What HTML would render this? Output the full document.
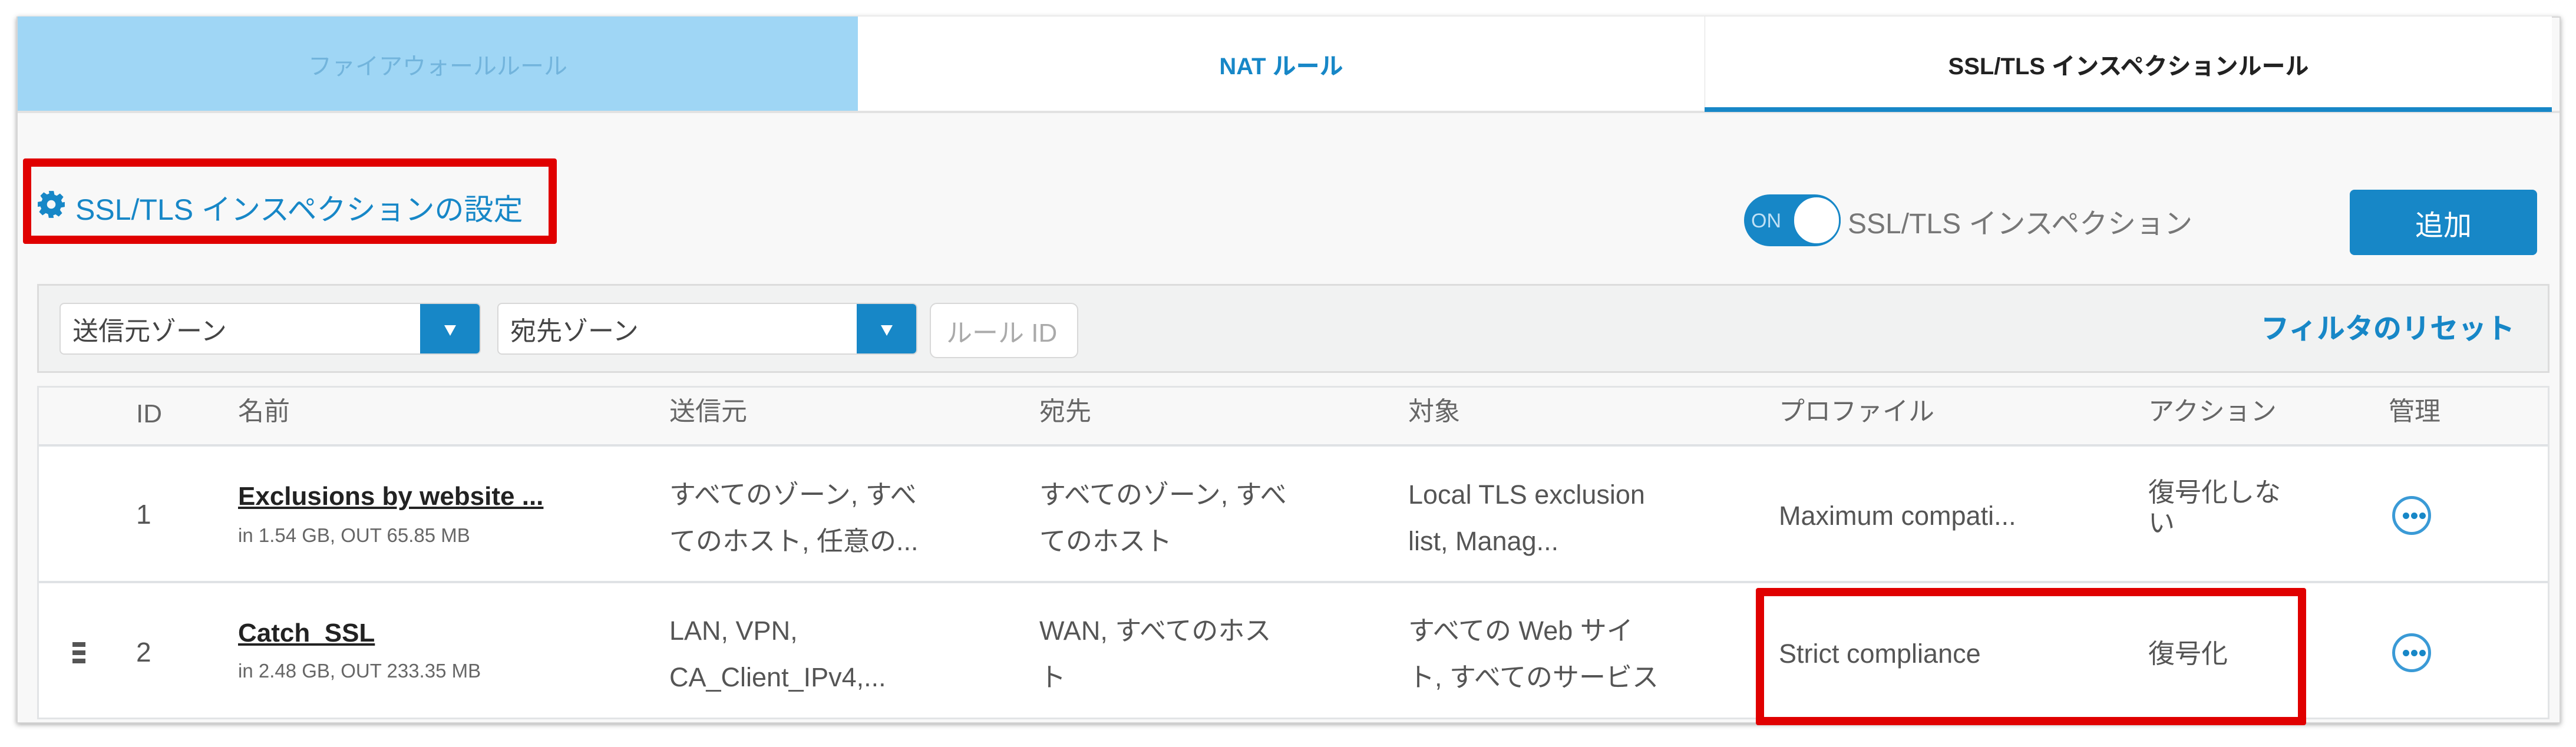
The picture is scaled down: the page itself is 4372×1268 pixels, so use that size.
<!DOCTYPE html>
<html><head><meta charset="utf-8"><style>
*{margin:0;padding:0;box-sizing:border-box}
body{width:4372px;height:1268px;background:#fff;position:relative;overflow:hidden;font-family:"Liberation Sans","Noto Sans CJK JP",sans-serif;color:#555}
.a{position:absolute;white-space:nowrap}
#panel{position:absolute;left:28px;top:28px;width:4318px;height:1200px;background:#f8f8f8;border:2px solid #d6d6d6;box-shadow:0 2px 8px rgba(0,0,0,.35)}
.tab{position:absolute;top:28px;height:162px;display:flex;align-items:center;justify-content:center;font-size:40px}
.sel{position:absolute;top:514px;height:88px;background:#fff;border:2px solid #d8d8d8;border-radius:8px;font-size:44px;color:#444;padding-left:20px;display:flex;align-items:center;overflow:hidden}
.sel .b{position:absolute;right:0;top:0;width:101px;height:100%;background:#1787c7}
.sel .b:after{content:"";position:absolute;left:41px;top:36px;border-left:10px solid transparent;border-right:10px solid transparent;border-top:18px solid #fff}
.h{position:absolute;top:674px;font-size:44px;color:#666;line-height:50px}
.t{font-size:45px;color:#555;line-height:79px}
.dots{position:absolute;width:66px;height:66px;border:5px solid #3a9ad6;border-radius:50%}
.dots i{position:absolute;top:23px;width:11px;height:11px;background:#1787c7;border-radius:50%}
.red{position:absolute;border:14px solid #e00000;border-radius:4px}
</style></head><body>
<div id="panel"></div>
<div class="tab" style="left:30px;width:1426px;background:#9fd6f5;color:#72b4dc">ファイアウォールルール</div>
<div class="tab" style="left:1456px;width:1437px;background:#fff;color:#1787c7;font-weight:bold">NAT ルール</div>
<div class="tab" style="left:2893px;width:1438px;background:#fff;color:#222;font-weight:bold;border-left:1px solid #e0e0e0">SSL/TLS インスペクションルール</div>
<div class="a" style="left:30px;top:188px;width:4314px;height:4px;background:#e2e2e2"></div>
<div class="a" style="left:2893px;top:182px;width:1438px;height:8px;background:#1787c7"></div>

<div class="red" style="left:39px;top:269px;width:906px;height:145px"></div>
<svg class="a" style="left:62px;top:322px" width="50" height="50" viewBox="0 0 24 24"><path fill="#1787c7" d="M10 1h4l.6 3.1 1.9.8 2.6-1.8 2.8 2.8-1.8 2.6.8 1.9L23 10v4l-3.1.6-.8 1.9 1.8 2.6-2.8 2.8-2.6-1.8-1.9.8L14 23h-4l-.6-3.1-1.9-.8-2.6 1.8-2.8-2.8 1.8-2.6-.8-1.9L1 14v-4l3.1-.6.8-1.9-1.8-2.6 2.8-2.8 2.6 1.8 1.9-.8zM12 8.5a3.5 3.5 0 100 7 3.5 3.5 0 100-7z"/></svg>
<div class="a" style="left:128px;top:316px;font-size:50px;color:#1787c7">SSL/TLS インスペクションの設定</div>

<div class="a" style="left:2960px;top:330px;width:164px;height:88px;border-radius:44px;background:#1787c7"></div>
<div class="a" style="left:3042px;top:332px;width:82px;height:84px;border-radius:42px;background:#fff;border:3px solid #1787c7"></div>
<div class="a" style="left:2972px;top:356px;font-size:34px;color:#bfe0f5">ON</div>
<div class="a" style="left:3136px;top:340px;font-size:48px;color:#777">SSL/TLS インスペクション</div>
<div class="a" style="left:3988px;top:322px;width:318px;height:111px;background:#1787c7;border-radius:8px;color:#fff;font-size:48px;display:flex;align-items:center;justify-content:center">追加</div>

<div class="a" style="left:63px;top:482px;width:4264px;height:151px;background:#f1f2f2;border:3px solid #dcdcdc"></div>
<div class="sel" style="left:101px;width:715px">送信元ゾーン<div class="b"></div></div>
<div class="sel" style="left:844px;width:713px">宛先ゾーン<div class="b"></div></div>
<div class="sel" style="left:1578px;width:252px;top:514px;height:94px;color:#aaa;border-radius:12px;padding-left:26px">ルール ID</div>
<div class="a" style="left:3837px;top:518px;font-size:48px;font-weight:bold;color:#1787c7">フィルタのリセット</div>

<div class="a" style="left:63px;top:655px;width:4264px;height:566px;background:#fff;border:3px solid #e2e4e6"></div>
<div class="a" style="left:66px;top:658px;width:4258px;height:100px;background:#f8f8f8;border-bottom:4px solid #dfe2e5"></div>
<div class="a" style="left:66px;top:986px;width:4258px;height:4px;background:#dfe2e5"></div>
<div class="h" style="left:231px;top:678px">ID</div>
<div class="h" style="left:404px">名前</div>
<div class="h" style="left:1136px">送信元</div>
<div class="h" style="left:1764px">宛先</div>
<div class="h" style="left:2390px">対象</div>
<div class="h" style="left:3019px">プロファイル</div>
<div class="h" style="left:3646px">アクション</div>
<div class="h" style="left:4054px">管理</div>

<div class="a" style="left:231px;top:846px;font-size:46px">1</div>
<div class="a" style="left:404px;top:818px;font-size:44px;color:#222;font-weight:bold;text-decoration:underline">Exclusions by website ...</div>
<div class="a" style="left:404px;top:890px;font-size:33px;color:#666">in 1.54 GB, OUT 65.85 MB</div>
<div class="a t" style="left:1136px;top:800px">すべてのゾーン, すべ<br>てのホスト, 任意の...</div>
<div class="a t" style="left:1764px;top:800px">すべてのゾーン, すべ<br>てのホスト</div>
<div class="a t" style="left:2390px;top:800px">Local TLS exclusion<br>list, Manag...</div>
<div class="a t" style="left:3019px;top:836px">Maximum compati...</div>
<div class="a" style="left:3646px;top:810px;font-size:45px;line-height:52px">復号化しな<br>い</div>
<div class="dots" style="left:4060px;top:842px"><i style="left:13px"></i><i style="left:27px"></i><i style="left:41px"></i></div>

<div class="a" style="left:123px;top:1090px;width:22px;height:8px;background:#555"></div>
<div class="a" style="left:123px;top:1104px;width:22px;height:8px;background:#555"></div>
<div class="a" style="left:123px;top:1118px;width:22px;height:8px;background:#555"></div>
<div class="a" style="left:231px;top:1080px;font-size:46px">2</div>
<div class="a" style="left:404px;top:1050px;font-size:44px;color:#222;font-weight:bold;text-decoration:underline">Catch_SSL</div>
<div class="a" style="left:404px;top:1120px;font-size:33px;color:#666">in 2.48 GB, OUT 233.35 MB</div>
<div class="a t" style="left:1136px;top:1031px">LAN, VPN,<br>CA_Client_IPv4,...</div>
<div class="a t" style="left:1764px;top:1031px">WAN, すべてのホス<br>ト</div>
<div class="a t" style="left:2390px;top:1031px">すべての Web サイ<br>ト, すべてのサービス</div>
<div class="a t" style="left:3019px;top:1070px">Strict compliance</div>
<div class="a t" style="left:3646px;top:1070px">復号化</div>
<div class="dots" style="left:4060px;top:1075px"><i style="left:13px"></i><i style="left:27px"></i><i style="left:41px"></i></div>
<div class="red" style="left:2980px;top:998px;width:934px;height:233px"></div>
</body></html>
